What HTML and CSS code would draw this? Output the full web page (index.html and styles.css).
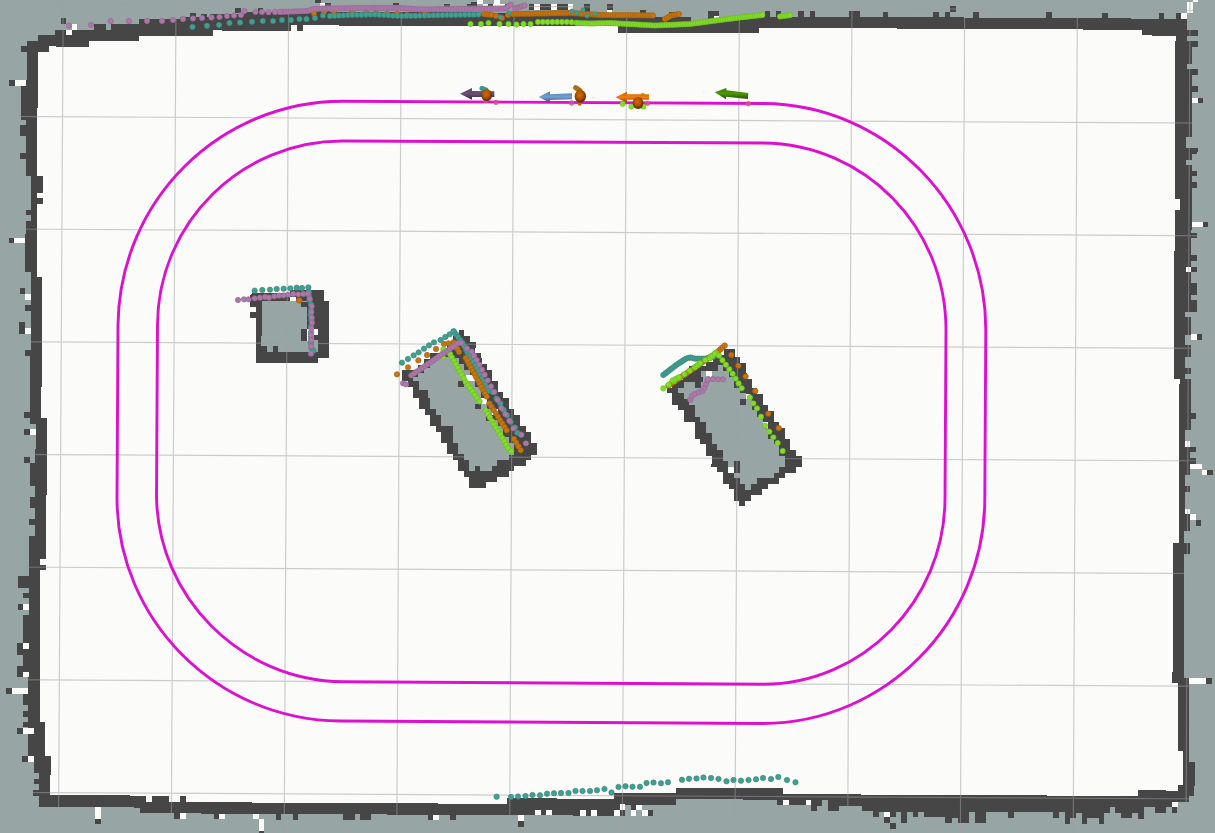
FILE: index.html
```html
<!DOCTYPE html>
<html lang="en">
<head>
<meta charset="utf-8">
<title>Map view</title>
<link rel="stylesheet" href="styles.css">
</head>
<body>
<main class="viewer">
<svg class="map" viewBox="0 0 1215 833" width="1215" height="833">
<defs>
<marker id="m-lilac" class="dot lilac-dot" markerWidth="8" markerHeight="8" refX="4" refY="4"><circle cx="4" cy="4" r="2.7"/></marker>
<marker id="m-teal" class="dot teal-dot" markerWidth="8" markerHeight="8" refX="4" refY="4"><circle cx="4" cy="4" r="2.7"/></marker>
<marker id="m-orange" class="dot orange-dot" markerWidth="8" markerHeight="8" refX="4" refY="4"><circle cx="4" cy="4" r="2.7"/></marker>
<marker id="m-lime" class="dot lime-dot" markerWidth="8" markerHeight="8" refX="4" refY="4"><circle cx="4" cy="4" r="2.7"/></marker>
<radialGradient id="ball" cx=".45" cy=".4" r=".6"><stop offset="0" stop-color="#d86a00"/><stop offset=".5" stop-color="#b05400"/><stop offset="1" stop-color="#4c2800"/></radialGradient>
<linearGradient id="a1" x2="0" y2="1"><stop offset="0" stop-color="#5c4466"/><stop offset=".5" stop-color="#6b4d74"/><stop offset="1" stop-color="#33243a"/></linearGradient>
<linearGradient id="a2" x2="0" y2="1"><stop offset="0" stop-color="#587fae"/><stop offset=".5" stop-color="#72a0d2"/><stop offset="1" stop-color="#35506f"/></linearGradient>
<linearGradient id="a3" x2="0" y2="1"><stop offset="0" stop-color="#c96000"/><stop offset=".5" stop-color="#f57d0c"/><stop offset="1" stop-color="#8a4000"/></linearGradient>
<linearGradient id="a4" x2="0" y2="1"><stop offset="0" stop-color="#3a7500"/><stop offset=".5" stop-color="#4d9605"/><stop offset="1" stop-color="#264d00"/></linearGradient>
</defs>

<g class="cells">
<!-- outer wall -->
<path class="wall" d="M27 41H38V35H55V30H94V24H106V30H111V24H139V19H180V17H210V14H245V12H300V10H330V12H480V13H600V17H691V21H708V17H964V18H1131V19H1187V30H1198V36H1187V41H1198V47H1192V64H1187V69H1198V75H1192V86H1198V92H1192V137H1186V148H1198V152H1197V154H1192V160H1186V165H1192V171H1197V176H1192V182H1197V188H1192V230H1191V233H1197V238H1191V255H1197V261H1191V267H1197V272H1191V283H1197V295H1191V300H1197V312H1185V317H1191V335H1185V345H1191V357H1185V368H1191V374H1185V379H1191V413H1196V419H1191V430H1185V447H1190V447H1196V452H1190V458H1196V464H1190V475H1185V486H1190V492H1185V514H1190V531H1184V543H1190V554H1184V678H1189V762H1195V786H1194V796H1189V802H1172V807H1166V813H1155V807H1144V819H1138V813H1132V818H1121V813H1115V807H1110V813H1104V824H1099V818H1087V824H1082V813H1076V818H1070V824H1065V812H1059V818H1053V812H1014V818H1008V812H986V823H975V812H969V823H958V818H952V823H945V817H924V812H918V817H913V812H907V823H901V812H896V817H890V812H879V817H873V811H862V806H839V811H828V800H822V806H817V811H811V805H777V800H743V799H676V805H625V816H573V815H387V814H201V813H140V808H134V807H39V796H33V790H39V784H34V779H39V773H34V756H28V727H23V722H28V717H23V711H28V705H23V694H28V677H17V666H23V655H17V643H23V615H29V598H23V593H29V588H18V576H29V536H35V525H29V519H35V508H30V497H35V486H30V463H35V449H36V424H30V418H24V412H30V356H25V350H31V311H25V305H31V272H25V234H26V221H31V215H26V210H31V176H26V159H20V153H26V136H20V125H26V120H21V86H26V80H27V52H21V46H27Z"/>
<path class="free" d="M38 52H49V46H56V47H89V41H139V36H213V30H222V31H291V25H297V31H303V25H339V26H618V33H759V28H897V29H1083V30H1142V35H1152V36H1176V41H1175V199H1180V210H1175V251H1174V379H1180V384H1179V543H1173V672H1172V683H1178V751H1183V785H1178V791H1166V790H1138V796H1047V795H861V794H783V788H676V793H614V799H557V798H507V804H438V803H252V802H186V796H180V802H169V796H152V802H146V796H130V795H50V775H51V756H45V722H40V570H46V565H40V559H46V495H47V418H41V387H42V277H37V204H43V198H37V193H43V176H37V108H38Z"/>
<path class="wall" d="M61 18h5v6h-5zM9 80h6v6h-6zM190 13h6v5h-6zM201 14h6v5h-6zM235 8h6v5h-6zM258 8h5v5h-5zM315 0h6v3h-6zM325 3h6v6h-6zM393 3h6v6h-6zM444 4h6v5h-6zM467 4h5v5h-5zM471 2h6v5h-6zM488 4h5v5h-5zM505 4h5v5h-5zM529 4h5v6h-5zM540 4h11v6h-11zM557 4h11v6h-11zM584 4h6v8h-6zM607 4h6v6h-6zM640 10h6v6h-6zM669 12h6v5h-6zM708 11h11v6h-11zM765 11h5v6h-5zM776 11h5v6h-5zM798 11h6v6h-6zM810 11h5v6h-5zM849 11h11v6h-11zM883 12h5v5h-5zM933 12h6v6h-6zM945 12h5v6h-5zM950 6h6v6h-6zM973 12h6v6h-6zM1046 12h6v6h-6zM1102 13h6v5h-6zM1159 13h5v6h-5zM1176 13h5v6h-5zM1198 98h5v5h-5zM1203 222h5v5h-5zM1197 334h5v6h-5zM1207 470h6v5h-6zM1196 520h5v6h-5zM1206 678h6v6h-6zM1172 807h5v6h-5zM9 238h5v5h-5zM20 288h5v6h-5zM25 305h6v6h-6zM19 322h6v12h-6zM24 429h6v6h-6zM24 457h6v6h-6zM18 604h5v6h-5zM6 688h6v6h-6zM17 728h6v6h-6zM22 756h6v6h-6zM95 819h6v5h-6zM174 813h6v6h-6zM214 813h5v6h-5zM259 830h5v3h-5zM276 814h5v6h-5zM293 814h5v6h-5zM343 814h12v6h-12zM360 814h11v6h-11zM428 815h5v5h-5zM450 815h6v5h-6zM518 821h6v6h-6zM631 805h5v5h-5zM648 810h5v6h-5zM884 817h6v6h-6zM890 823h6v6h-6z"/>
<path class="free" d="M72 24h5v6h-5zM66 30h6v5h-6zM15 80h11v6h-11zM320 3h5v3h-5zM477 0h6v4h-6zM494 0h6v4h-6zM483 4h5v5h-5zM493 4h12v5h-12zM534 4h6v6h-6zM551 4h6v6h-6zM568 4h5v6h-5zM607 10h5v4h-5zM714 16h5v3h-5zM1193 0h5v2h-5zM1187 2h6v11h-6zM1181 13h6v6h-6zM1192 98h6v5h-6zM1192 222h11v5h-11zM1186 267h5v5h-5zM1191 334h6v6h-6zM1185 441h5v6h-5zM1190 464h12v5h-12zM1202 470h5v5h-5zM1185 509h5v5h-5zM1190 514h6v6h-6zM1189 678h17v6h-17zM1172 802h6v5h-6zM14 238h11v5h-11zM25 294h6v6h-6zM25 328h6v6h-6zM30 429h6v6h-6zM23 604h6v6h-6zM23 643h6v6h-6zM23 672h6v5h-6zM12 688h16v6h-16zM23 728h11v6h-11zM28 756h6v6h-6zM95 807h6v12h-6zM180 813h6v6h-6zM219 814h6v5h-6zM253 814h6v5h-6zM259 819h5v12h-5zM433 815h6v5h-6zM518 815h6v6h-6zM535 810h6v5h-6zM546 810h6v5h-6zM580 810h6v6h-6zM591 810h6v6h-6zM614 810h6v6h-6zM620 804h5v6h-5zM636 805h6v5h-6zM631 810h5v6h-5zM642 810h6v6h-6zM783 800h6v5h-6zM806 800h5v5h-5zM884 812h6v5h-6z"/>
</g>

<g class="cells" transform="translate(225 275) scale(.33333)">
<path class="wall" d="M83 55H195V45H297V78H312V249H279V263H93V128H75V111H93V95H75V62Z"/>
<path class="unknown" d="M111 78H246V230H159V213H144V230H126V213H108V183H111ZM246 195H279V230H246Z"/>
<path class="wall" d="M228 80h20v17h-20zM228 162h18v36h-18zM246 130h20v18h-20z"/>
<path class="free" d="M195 65h18v14h-18zM246 162h33v18h-33zM246 180h20v17h-20z"/>
</g>

<g class="cells" transform="translate(385 320) scale(.33333)">
<path class="wall" d="M222 30H237V47H254V67H272V83H270V98H288V115H290V131H305V150H320V183H338V216H354V234H371V268H388V285H405V318H422V335H439V370H456V404H438V420H422V437H388V453H371V470H336V487H303V503H252V470H236V452H219V419H203V402H186V368H168V335H152V318H135V285H119V268H102V235H85V200H70V183H52V150H68V150H100V135H117V117H135V100H168V83H186V65H204V47H222Z"/>
<path class="unknown" d="M92 170H100V160H117V145H135V130H150V117H168V110H190V98H205V115H222V133H238V150H254V183H270V200H288V235H305V268H320V300H338V318H354V352H371V370H388V404H371V420H336V437H320V453H286V438H270V453H252V419H236V402H219V368H204V318H168V285H152V268H135V235H130V210H102V183H85V170Z"/>
<path class="wall" d="M219 183h18v18h-18zM270 252h18v15h-18zM304 285h15v17h-15z"/>
<path class="free" d="M243 165h28v18h-28zM288 235h18v17h-18zM305 245h16v8h-16zM320 268h18v18h-18z"/>
</g>

<g class="cells" transform="translate(650 335) scale(.33333)">
<path class="wall" d="M222 42H254V67H270V83H288V115H290V132H305V160H320V177H338V210H354V228H371V262H388V279H405V312H420V345H438V362H456V396H438V413H405V430H388V447H354V463H336V480H303V497H285V512H267V497H252V463H236V447H219V411H201V395H183V387H185V362H168V328H150V312H135V262H102V225H85V210H67V173H50V160H67V135H100V118H117V92H168V80H190V60H222Z"/>
<path class="unknown" d="M85 160H102V142H135V158H152V142H160V125H185V108H204V90H219V108H236V125H252V158H270V175H288V192H305V225H320V245H338V279H354V312H371V328H388V362H405V396H388V413H371V430H320V447H303V465H285V447H270V430H252V395H234V378H219V345H201V328H185V295H168V262H150V245H135V210H118V192H102V175H85ZM152 108h16v17h-16z"/>
<path class="wall" d="M270 192h18v18h-18zM252 378h18v35h-18z"/>
<path class="free" d="M234 396h18v17h-18zM168 108h18v17h-18zM338 262h16v17h-16zM288 177h12v15h-12z"/>
</g>

<path class="grid" d="M63.2 0L58.5 833M176 0L171.3 833M288.7 0L284.2 833M401.4 0L396.8 833M514.1 0L509.6 833M626.8 0L622.3 833M739.4 0L735 833M852 0L847.7 833M964.7 0L960.4 833M1077.4 0L1073.2 833M1190 0L1186 833M0 3.5L1215 10.5M0 116.3L1215 123.2M0 229L1215 235.8M0 341.7L1215 348.4M0 454.3L1215 461M0 567L1215 573.7M0 679.7L1215 686.3M0 792.3L1215 799"/>

<path class="track" d="M118 325C119.500 199 221 101 343 101.300L763 103.500C887 104 986 207 985.800 330L984.800 500C984 622 886 723 763 723.500L340 721C216 720 117 619 117 498Z"/>
<path class="track" d="M157.500 325C158 222 242 140.500 343 141L763 143C865 144 946 227 946 330L945 500C944 601 863 684 763 684.300L343 681.700C241 681 157 597 156.500 495Z"/>

<!-- laser returns along the upper wall -->
<g class="pts">
<path class="lime run" data-step="4.8" d="M538 22L570 22L578 23"/>
<path class="lime run" data-step="2.5" d="M578 23L590 23.500L610 23L655 25.500L690 24L720 20L740 17.500L763 15"/>
<path class="lime run" data-step="2.5" d="M780 16.500L791 15"/>
<polyline class="lime" points="470.5,24 481,24 488.500,23 499.500,24 508.500,24 516.500,24.500 523.500,24 530.500,24"/>
<path class="orange run" data-step="2.5" d="M484 14L493 15"/>
<path class="orange run" data-step="2.5" d="M513 14L570 13L600 15L655 15.500"/>
<path class="orange run" data-step="2.5" d="M665 19L671 15.500L679 14"/>
<polyline class="orange" points="314,13.500 324,12 334,12 352,11 366,12.500 376,13 387,14 397,14 407,15 425,14 496,16 502,18 508,15"/>
<path class="teal run" data-step="4.5" d="M330 16L350 15L375 14.500L400 16L450 15L482 14.500"/>
<polyline class="teal" points="192.500,27 207,25.800 219,25 229.500,23 240,22.500 252,21.800 262.800,21 273,21 282,20 291,20 299.500,19 306.500,19 315,18 323,15.500"/>
<polyline class="teal small" points="500,17 509,13 572,11 577,13 583,10 587,16 595,14"/>
<path class="lilac run" data-step="2.8" d="M280 12L308 11L313 9L358 8L400 8L420 9.500L505 8.500L511 4.500"/>
<path class="lilac run" data-step="2.5" d="M515 8.500L526 5"/>
<polyline class="lilac" points="69,25.500 91,25 110.700,21 129,21 147,21 162,21 173,20 183,19 193,18.500 202,18 211.500,17.500 219.500,17 227,16 234,15.500 241,15 244.500,11 255.500,12 262,12 268.500,12.300 275,12 280,11.800"/>
<!-- returns along the lower wall -->
<polyline class="teal" points="496.600,796.700 511,797 518,796.500 525.500,796 532.500,795 540,795.300 547,793.700 554,793.300 561,793 568.500,793 575.500,791 582.500,791 590,791 597,790.300 604.500,789 611.500,792.500 618.500,787 625.500,786.300 632.500,786.800 640,786.800 646.500,783 653.500,782.500 661,783.300 668,782.300 682,779.800 689,778.800 696.500,778.500 703.500,777.500 711,778 718.500,779 726.500,781.300 733.500,780 741,780.700 748.500,780 756,779.300 763,778 771,779 778.300,777 787,780 795.500,782.300"/>
</g>

<g class="pts close" transform="translate(225 275) scale(.33333)">
<polyline class="teal" points="89,47 112,45 135,44 155,42 176,41 196,40 215,38 231,39 250,37 252,50 252,62 254,76 258,88 258,105 257,120 259,135 258,155 258,173 258,188 258,203 259,218 265,227"/>
<polyline class="lilac" points="39,75 57,73 71,73 89,70 105,68 120,66 132,68 148,64 162,62 176,61 190,59 205,57 220,58 235,57 249,56 254,72 260,94 259,111 260,128 261,143 259,161 258,180 258,196 258,214 258,236"/>
<polyline class="orange" points="222,76 223,76"/>
</g>

<g class="pts close" transform="translate(385 320) scale(.33333)">
<path class="teal run" data-step="11" d="M206 34L235 72L250 105L270 135L290 175L310 212L330 218"/>
<polyline class="teal" points="51,128 69,117 86,106 101,97 117,86 132,76 147,67 167,60 181,51 194,43 206,34 323,215 334,235 346,250 356,270 366,286 377,306 390,322 397,338 408,344"/>
<polyline class="orange" points="177,72 191,70 206,67"/>
<path class="orange run" data-step="11" d="M206 67L226 102"/>
<path class="orange run" data-step="11" d="M242 114L310 238"/>
<path class="orange run" data-step="12" d="M313 250L371 340"/>
<path class="orange run" data-step="13" d="M387 357L411 397"/>
<polyline class="orange" points="36,163 69,142 100,121 126,105 153,87"/>
<path class="lime run" data-step="11" d="M175 88L173 110"/>
<path class="lime run" data-step="12" d="M195 102L242 186L289 252"/>
<path class="lime run" data-step="12" d="M302 272L352 354L370 386L386 400"/>
<path class="lilac run" data-step="10" d="M79 166L222 68L234 70"/>
<polyline class="lilac" points="54,190 63,193 246,85 260,95 267,107 275,120 283,134 291,149 299,164 308,181 318,199 328,216 338,240 349,264 361,282 373,302 385,325 409,344 423,370"/>
</g>

<g class="pts close" transform="translate(650 335) scale(.33333)">
<path class="teal run" data-step="7" d="M40 120L80 89L108 71L119 67L135 71L168 71L195 64"/>
<path class="orange run" data-step="8" d="M55 152L200 53L226 30"/>
<polyline class="orange" points="244,60 265,92 287,124 316,168 355,236 386,279"/>
<path class="lime run" data-step="19" d="M40 160L125 103L198 53"/>
<path class="lime run" data-step="10" d="M68 136L86 127"/>
<path class="lime run" data-step="10" d="M135 97L152 83"/>
<path class="lime run" data-step="10" d="M180 70L198 53"/>
<path class="lime run" data-step="17" d="M207 62L245 112L281 169"/>
<polyline class="lime" points="300,187 310,205 321,220 333,245 345,272 358,290 370,307 383,324 398,348"/>
<path class="lilac run" data-step="12" d="M121 194L128 179L160 167L174 132"/>
<polyline class="lilac" points="174,132 189,132 204,133 219,133"/>
</g>

<!-- robot poses -->
<g class="poses" transform="translate(400 0) scale(.33333)">
<path class="speck" d="M316 294h2v2h-2zM366 292h3v2h-3zM393 291h3v2h-3zM576 291h9v2h-9zM909 273h3v2h-3zM915 273h3v2h-3z"/>
<g class="goal"><circle cx="257" cy="303" r="7"/><circle cx="288" cy="307" r="8"/><circle cx="515" cy="309" r="8"/><circle cx="742" cy="310" r="8"/><circle cx="1045" cy="311" r="8"/></g>
<path class="teal stub" d="M246 265L258 270"/>
<path fill="url(#a1)" d="M180 281L216 264V273L283 274V291L216 291V299Z"/>
<ellipse cx="260" cy="286" rx="16" ry="18" fill="url(#ball)"/>
<path fill="url(#a2)" d="M416 291L450 274V283L516 280V298L450 300V308Z"/>
<path class="olive stub" d="M527 263L540 272"/>
<circle class="rust" cx="539" cy="311" r="6"/>
<ellipse cx="541" cy="289" rx="17" ry="19" fill="url(#ball)"/>
<g class="lime-dot"><circle cx="668" cy="312" r="8"/><circle cx="694" cy="320" r="8"/><circle cx="728" cy="286" r="7"/><circle cx="730" cy="320" r="8"/></g>
<path fill="url(#a3)" d="M646 292L681 275V283H747V299H681V308Z"/>
<ellipse cx="714" cy="309" rx="16" ry="18" fill="url(#ball)"/>
<path fill="url(#a4)" d="M944 277L979 264V271L1045 279L1044 297L978 290V298Z"/>
</g>
</svg>
</main>
<script src="scan.js"></script>
</body>
</html>
```
FILE: styles.css
```css
body { margin: 0; background: #97a6a4; overflow: hidden; }
.viewer { width: 1215px; height: 833px; }
.map { display: block; }
.cells { shape-rendering: crispEdges; }
.wall { fill: #464646; }
.free { fill: #fbfbfa; }
.unknown { fill: #97a6a4; }
.grid { fill: none; stroke: #a0a0a4; stroke-opacity: .5; stroke-width: 1.2; }
.track { fill: none; stroke: #dd10d0; stroke-width: 2.9; }

.pts { stroke-width: 1; }
.pts polyline { fill: none; stroke: none; }
.close polyline { stroke-width: 3; }
.run { fill: none; stroke: none; }
.pts polyline.small { stroke-width: .8; }

.dot { overflow: visible; }
.dot circle { stroke-width: .6; }
.beads circle { r: 2.7px; stroke-width: .6; }
.close .beads circle { r: 8.1px; stroke-width: 1.8; }
.lilac-dot { fill: #ab78a8; stroke: #946790; }
.teal-dot { fill: #429e90; stroke: #348678; }
.orange-dot { fill: #c47410; stroke: #a0600e; }
.lime-dot { fill: #82dc28; stroke: #6ab722; }

polyline.lilac { marker: url(#m-lilac); }
polyline.teal { marker: url(#m-teal); }
polyline.orange { marker: url(#m-orange); }
polyline.lime { marker: url(#m-lime); }

.goal { fill: #d4548c; fill-opacity: .85; }
.speck { fill: #d8dad8; }
.stub { fill: none; stroke-width: 15; stroke-linecap: round; }
.teal.stub { stroke: #3e9588; }
.olive { stroke: #a8700c; }
.rust { fill: #c06408; }
```
FILE: scan.js
```js
// Places one point per step along each laser run.
const NS = "http://www.w3.org/2000/svg";
for (const run of document.querySelectorAll(".run")) {
  const group = document.createElementNS(NS, "g");
  group.setAttribute("class", "beads " + run.classList[0] + "-dot");
  const length = run.getTotalLength();
  const step = Number(run.dataset.step);
  for (let at = 0; at <= length; at += step) {
    const p = run.getPointAtLength(at);
    const dot = document.createElementNS(NS, "circle");
    dot.setAttribute("cx", p.x);
    dot.setAttribute("cy", p.y);
    group.appendChild(dot);
  }
  run.replaceWith(group);
}
```
